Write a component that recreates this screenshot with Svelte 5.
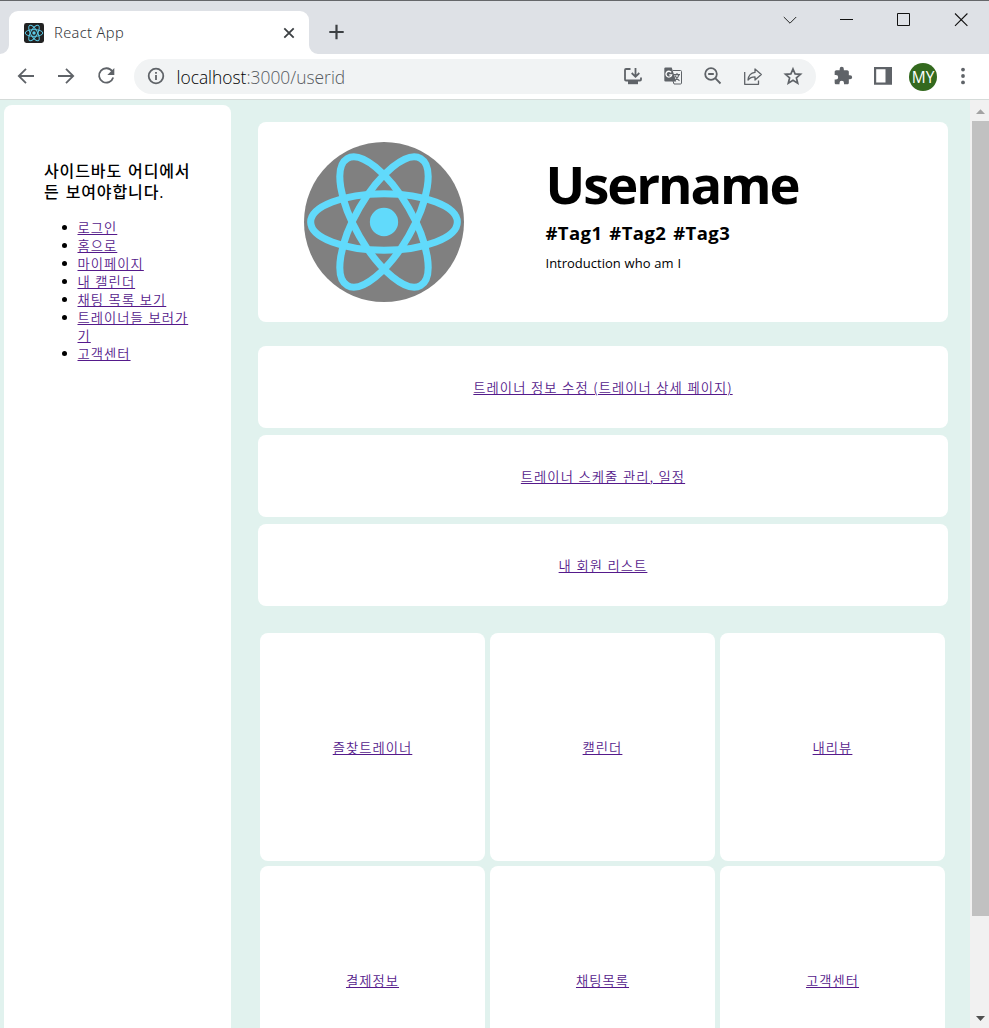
<script>
  const sideLinks = ['로그인', '홈으로', '마이페이지', '내 캘린더', '채팅 목록 보기', '트레이너들 보러가기', '고객센터'];
  const menuRows = ['트레이너 정보 수정 (트레이너 상세 페이지)', '트레이너 스케줄 관리, 일정', '내 회원 리스트'];
  const tiles = ['즐찾트레이너', '캘린더', '내리뷰', '결제정보', '채팅목록', '고객센터'];
</script>

{#snippet atom(stroke)}
  <g fill="none" stroke="currentColor" stroke-width={stroke}>
    <ellipse rx="11" ry="4.25" />
    <ellipse rx="11" ry="4.25" transform="rotate(60)" />
    <ellipse rx="11" ry="4.25" transform="rotate(120)" />
  </g>
  <circle r="2.12" fill="currentColor" />
{/snippet}

<div class="window">
  <header class="titlebar">
    <div class="tab">
      <svg class="favicon" viewBox="-12.5 -12.5 25 25" width="20" height="20">
        <rect x="-12.5" y="-12.5" width="25" height="25" rx="3" fill="#222" />
        {@render atom(1.2)}
      </svg>
      <span class="tab-title">React App</span>
      <svg class="close" width="12" height="12" viewBox="0 0 12 12"><path d="M1.3 1.3 10.7 10.7M10.7 1.3 1.3 10.7" /></svg>
      <svg class="flare left" width="9" height="9"><path d="M9 0V9H0A9 9 0 0 0 9 0Z" fill="#fff" /></svg>
      <svg class="flare right" width="9" height="9"><path d="M0 0V9H9A9 9 0 0 1 0 0Z" fill="#fff" /></svg>
    </div>
    <svg class="plus" width="16" height="16" viewBox="0 0 16 16"><path d="M8.5 .8V15.2M1.3 8H15.7" /></svg>
    <div class="controls">
      <svg width="14" height="14" viewBox="0 0 14 14"><path d="M.8 4 7 10.2 13.2 4" stroke-width=".9" /></svg>
      <svg width="14" height="14" viewBox="0 0 14 14"><path d="M0 6.5H13" stroke-width="1" /></svg>
      <svg width="14" height="14" viewBox="0 0 14 14"><path d="M.5 .5H12.5V12.5H.5Z" stroke-width="1" /></svg>
      <svg width="14" height="14" viewBox="0 0 14 14"><path d="M1 .5 13.4 12.9M13.4 .5 1 12.9" /></svg>
    </div>
  </header>

  <nav class="toolbar">
    <div class="history">
      <svg width="20" height="20" viewBox="0 0 20 20"><path d="M18 10H3M10 2.8 2.8 10 10 17.2" /></svg>
      <svg width="20" height="20" viewBox="0 0 20 20"><path d="M2 10H17M10 2.8 17.2 10 10 17.2" /></svg>
      <svg width="20" height="20" viewBox="0 0 20 20"><path d="M16.2 5.3A7.2 7.2 0 1 0 17.2 11.5" /><path class="solid" d="M18.3 2V9H11.3Z" /></svg>
    </div>
    <div class="address">
      <svg width="18" height="18" viewBox="0 0 18 18"><circle cx="9" cy="9" r="7.3" /><path d="M9 8V13M9 5V6.8" /></svg>
      <span class="url"><b>localhost</b>:3000/userid</span>
      <div class="actions">
        <svg width="20" height="20" viewBox="0 0 20 20"><path d="M7.5 3H3Q2 3 2 4V13.5Q2 14.5 3 14.5H17Q18 14.5 18 13.5V11.5M12.5 2V10M8.7 7 12.5 10.8 16.3 7" /><path class="solid" d="M5 14H15V18.2H5Z" /></svg>
        <svg width="20" height="20" viewBox="0 0 20 20">
          <path class="solid" d="M2.5 1.5H8.7L13.2 15.5H2.5Q1.3 15.5 1.3 14.5V2.7Q1.3 1.5 2.5 1.5Z" />
          <path d="M9.8 4.5H17.5Q18.5 4.5 18.5 5.5V17Q18.5 18 17.5 18H11L10 15" stroke-width="1" />
          <path d="M8.2 6.4A2.9 2.9 0 1 0 8.7 8.8H6.2" stroke="#fff" stroke-width="1.3" />
          <path d="M11 8.6H17M14 7V8.6M16 8.6Q15 12.5 11.8 14.4M12.2 9.8Q13.4 12.8 16.5 14.8" stroke-width="1.1" />
        </svg>
        <svg width="20" height="20" viewBox="0 0 20 20"><circle cx="8" cy="8" r="5.8" /><path d="M5.2 8H10.8M12.2 12.2 17.5 17.5" /></svg>
        <svg width="20" height="20" viewBox="0 0 20 20"><path d="M1.7 6V18.3H15.5V14.5M5 14C5.5 9.5 8 6.8 12 6.4V3L18.3 8.5 12 14V10.8C8.5 10.8 6.5 12 5 14Z" stroke-width="1.3" stroke-linejoin="round" /></svg>
        <svg width="20" height="20" viewBox="0 0 20 20"><path d="M10 3 12.1 7.9 17.5 8.3 13.4 11.8 14.7 17.2 10 14.3 5.3 17.2 6.6 11.8 2.5 8.3 7.9 7.9Z" stroke-width="1.7" /></svg>
      </div>
    </div>
    <div class="extras">
      <svg width="20" height="20" viewBox="0 0 24 24"><path class="solid" d="M20.5 11H19V7c0-1.1-.9-2-2-2h-4V3.5a2.5 2.5 0 0 0-5 0V5H4c-1.1 0-2 .9-2 2v3.8h1.5a2.7 2.7 0 0 1 0 5.4H2V20c0 1.1.9 2 2 2h3.8v-1.5a2.7 2.7 0 0 1 5.4 0V22H17c1.1 0 2-.9 2-2v-4h1.5a2.5 2.5 0 0 0 0-5Z" /></svg>
      <svg width="20" height="20" viewBox="0 0 20 20"><path class="solid" fill-rule="evenodd" d="M1 1H19V18.8H1ZM3.2 3.2V16.5H12.5V3.2Z" /></svg>
      <span class="avatar">MY</span>
      <svg width="20" height="20" viewBox="0 0 20 20"><g class="solid"><circle cx="10" cy="3.6" r="1.9" /><circle cx="10" cy="10" r="1.9" /><circle cx="10" cy="16.4" r="1.9" /></g></svg>
    </div>
  </nav>

  <div class="viewport">
    <aside>
      <h3>사이드바도 어디에서<br />든 보여야합니다.</h3>
      <ul>
        {#each sideLinks as link}
          <li><a href="#top">{link}</a></li>
        {/each}
      </ul>
    </aside>

    <main>
      <section class="profile card">
        <svg class="portrait" width="160" height="160" viewBox="-12 -12 24 24">
          <circle r="12" fill="#808080" />
          {@render atom(1.06)}
        </svg>
        <div class="about">
          <h1>Username</h1>
          <h2>#Tag1 #Tag2 #Tag3</h2>
          <p>Introduction who am I</p>
        </div>
      </section>

      <section class="rows">
        {#each menuRows as row}
          <div class="card row"><a href="#top">{row}</a></div>
        {/each}
      </section>

      <section class="tiles">
        {#each tiles as tile}
          <div class="card tile"><a href="#top">{tile}</a></div>
        {/each}
      </section>
    </main>

    <div class="scrollbar">
      <svg width="17" height="21" viewBox="0 0 17 21"><path d="M4 14 8.5 9.3 13 14Z" fill="#a3a3a3" /></svg>
      <div class="thumb"></div>
      <svg class="down" width="17" height="17" viewBox="0 0 17 17"><path d="M4 5 8.5 10 13 5Z" fill="#505050" /></svg>
    </div>
  </div>
</div>

<style>
  :global(body) { margin: 0; overflow: hidden; }
  * { box-sizing: border-box; }
  .window {
    width: 989px; height: 1028px; display: flex; flex-direction: column; overflow: hidden;
    background: #fff; color: #000; font-family: "Open Sans", "Noto Sans CJK KR", sans-serif;
  }
  svg { display: block; flex: none; fill: none; stroke: #5f6368; stroke-width: 1.8; }
  .solid { fill: #5f6368; stroke: none; }

  .titlebar { height: 54px; flex: none; display: flex; background: #dee1e6; border-top: 1px solid #65676a; padding-left: 9px; }
  .tab {
    position: relative; width: 300px; height: 43px; margin-top: 10px; padding: 0 15px; display: flex; align-items: center;
    background: #fff; border-radius: 9px 9px 0 0;
  }
  .favicon { color: #5ccbe8; stroke: none; }
  .tab-title { margin-left: 10px; padding-bottom: 2px; font-size: 14.6px; letter-spacing: .38px; color: #33363a; flex: 1; font-family: "Noto Sans", sans-serif; font-weight: 300; }
  .close { stroke: #3c4043; margin-right: -1px; }
  .flare { position: absolute; bottom: 0; stroke: none; }
  .left { left: -9px; }
  .right { right: -9px; }
  .plus { margin: 23px 0 0 19px; stroke: #3c4043; stroke-width: 2.2; }
  .controls { margin: 12px 21px 0 auto; display: flex; gap: 43px; }
  .controls svg { stroke: #111; stroke-width: 1.1; }

  .toolbar { height: 46px; flex: none; display: flex; align-items: center; padding: 0 16px; border-bottom: 1px solid #d5dbd9; }
  .toolbar svg { margin-top: -1px; }
  .history { display: flex; gap: 20px; }
  .address { display: flex; align-items: center; width: 682px; height: 35px; margin-left: 18px; padding: 0 13px; border-radius: 18px; background: #f1f3f4; }
  .url { margin-left: 11.5px; font-size: 17.4px; font-weight: 300; color: #55595e; line-height: 24px; }
  .url b { font-weight: 300; color: #000; }
  .actions { display: flex; gap: 20px; margin-left: auto; }
  .extras { display: flex; align-items: center; gap: 20px; margin-left: 17px; }
  .avatar { width: 28px; height: 28px; margin: 0 -4px; border-radius: 50%; background: #33691e; color: #fff; display: grid; place-items: center; font-size: 15.5px; line-height: 28px; align-content: start; }

  .viewport { flex: 1; min-height: 0; display: flex; background: #e1f2ee; overflow: hidden; }
  aside { width: 227px; flex: none; height: 940px; margin: 5px 0 0 4px; padding: 56px 38px 0 40px; background: #fff; border-radius: 8px; }
  h1, h2, h3, p, ul { margin: 0; padding: 0; }
  h3 { font-size: 16px; line-height: 21px; font-weight: 500; letter-spacing: .88px; word-spacing: 1px; white-space: nowrap; }
  ul { margin-top: 15px; padding-left: 33.5px; }
  li { line-height: 18px; font-size: 13.3px; }
  a {
    position: relative; top: 1px;
    color: #551a8b; font-size: 13.3px; line-height: 18px; font-weight: 350; letter-spacing: 1.03px; word-spacing: .6px;
    font-family: "Noto Sans CJK KR", sans-serif; word-break: break-all; text-underline-offset: 1px; text-decoration-thickness: 1px;
  }
  li a { top: .5px; }
  main { width: 690px; flex: none; margin: 22px 0 0 27px; }
  .card { background: #fff; border-radius: 8px; }
  .profile { height: 200px; display: flex; padding: 20px 0 0 46px; }
  .portrait { color: #61dafb; stroke: none; }
  .about { margin-left: 81.5px; padding-top: 7px; white-space: nowrap; }
  h1 { font-size: 52.5px; line-height: 70px; font-weight: 700; letter-spacing: -2.05px; }
  h2 { margin-top: 1px; font-size: 18.5px; line-height: 26px; font-weight: 700; letter-spacing: .4px; word-spacing: 1.8px; }
  p { margin-top: 8px; font-size: 13px; line-height: 18px; font-weight: 400; word-spacing: .5px; }
  .rows { display: grid; gap: 7px; margin-top: 24px; }
  .row { height: 82px; display: grid; place-items: center; }
  .tiles { display: grid; grid-template-columns: repeat(3, 225px); gap: 5px; margin: 27px 0 0 2px; }
  .tile { height: 228px; display: grid; place-items: center; }
  .scrollbar { width: 19px; padding-left: 2px; margin-left: auto; background: #f1f1f1; display: flex; flex-direction: column; }
  .scrollbar svg { stroke: none; }
  .thumb { height: 795px; background: #c1c1c1; }
  .down { margin-top: auto; }
</style>
